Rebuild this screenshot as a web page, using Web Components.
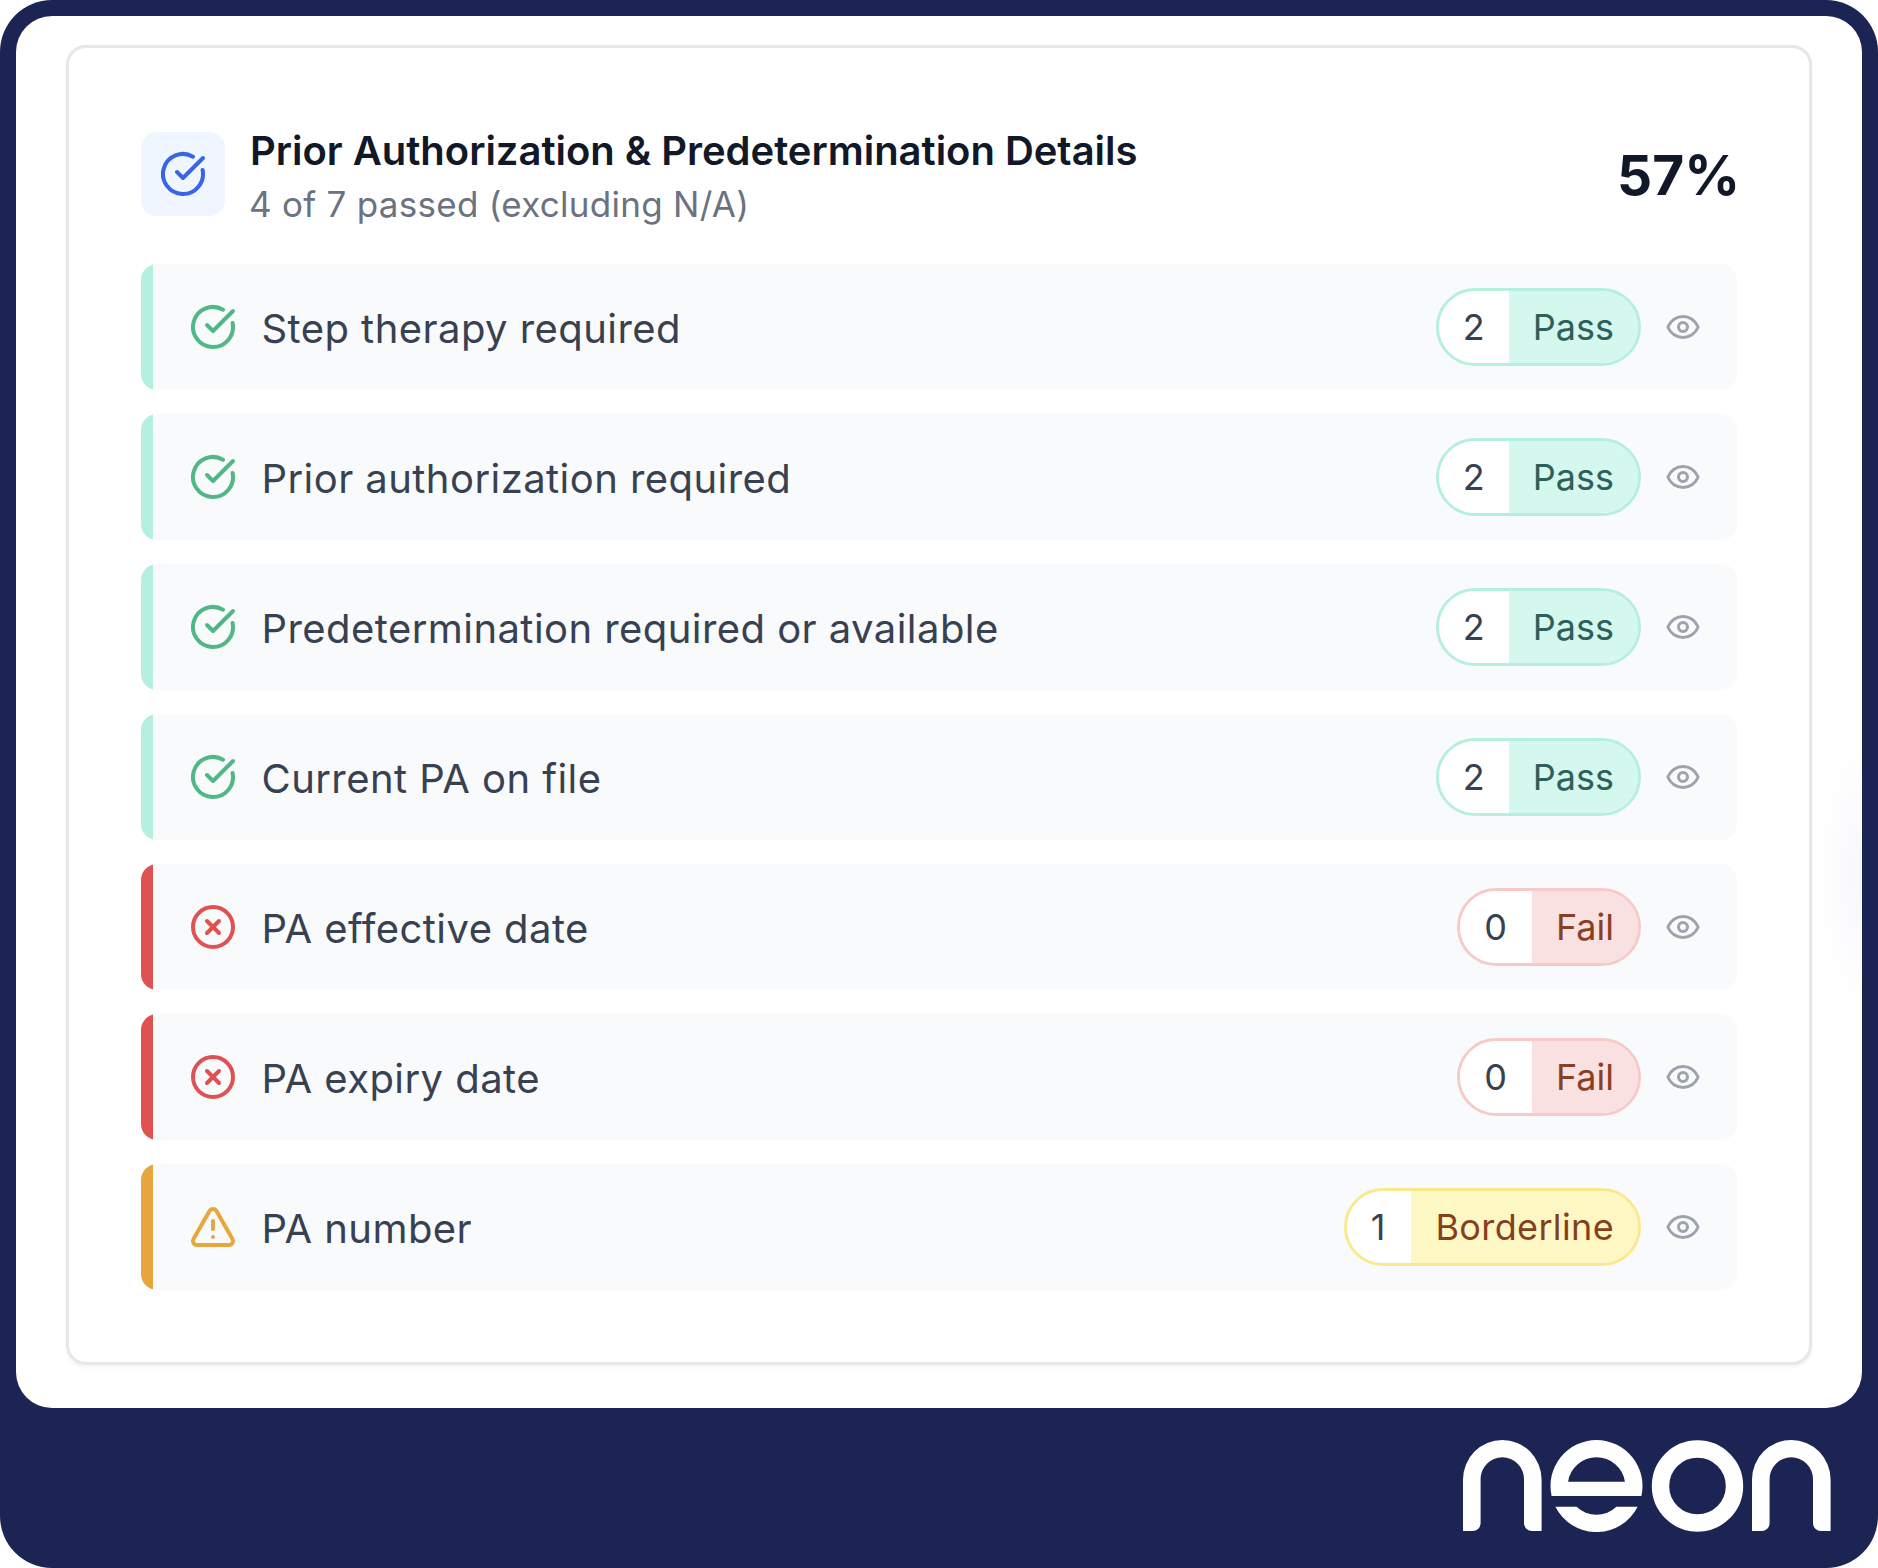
<!DOCTYPE html>
<html lang="en">

<head>
	<meta charset="UTF-8">
	<title>Prior Authorization &amp; Predetermination Details</title>
	<style>
		html, body { margin: 0; background: #fff; }
		body { font-family: Inter, "Liberation Sans", sans-serif; }
	</style>
</head>

<body>
	<app-frame>
		<score-card heading="Prior Authorization &amp; Predetermination Details" sub="4 of 7 passed (excluding N/A)" score="57%">
			<check-row status="pass" count="2">Step therapy required</check-row>
			<check-row status="pass" count="2">Prior authorization required</check-row>
			<check-row status="pass" count="2">Predetermination required or available</check-row>
			<check-row status="pass" count="2">Current PA on file</check-row>
			<check-row status="fail" count="0">PA effective date</check-row>
			<check-row status="fail" count="0">PA expiry date</check-row>
			<check-row status="borderline" count="1">PA number</check-row>
		</score-card>
	</app-frame>

	<script>
		// lucide style icons, 24 box
		const ICONS = {
			check: '<path d="M21.801 10A10 10 0 1 1 17 3.335"/><path d="m9 11 3 3L22 4"/>',
			cross: '<circle cx="12" cy="12" r="10"/><path d="m15 9-6 6"/><path d="m9 9 6 6"/>',
			warn: '<path d="m21.73 18-8-14a2 2 0 0 0-3.48 0l-8 14A2 2 0 0 0 4 21h16a2 2 0 0 0 1.73-3"/><path d="M12 9v4"/><path d="M12 17h.01"/>',
			eye: '<path d="M2.062 12.348a1 1 0 0 1 0-.696 10.75 10.75 0 0 1 19.876 0 1 1 0 0 1 0 .696 10.75 10.75 0 0 1-19.876 0"/><circle cx="12" cy="12" r="3"/>'
		};

		class UiIcon extends HTMLElement {
			connectedCallback() {
				const size = this.getAttribute('size') || 48;
				this.attachShadow({ mode: 'open' });
				this.shadowRoot.innerHTML = `
					<style>
						:host { display: block; flex: none; width: ${size}px; height: ${size}px; color: inherit; }
						svg { display: block; }
					</style>
					<svg width="${size}" height="${size}" viewBox="0 0 24 24" fill="none" stroke="currentColor" stroke-width="2" stroke-linecap="round" stroke-linejoin="round">${ICONS[this.getAttribute('name')]}</svg>`;
			}
		}
		customElements.define('ui-icon', UiIcon);

		class NeonLogo extends HTMLElement {
			connectedCallback() {
				this.attachShadow({ mode: 'open' });
				const n = 'M0 91V39.5A39.3 39.5 0 0 1 78.6 39.5V91H69A8 8 0 0 1 61 83V39A21.6 21.6 0 0 0 17.6 39V83A8 8 0 0 1 9.6 91Z';
				this.shadowRoot.innerHTML = `
					<style>
						:host { display: block; width: 368px; height: 92px; }
						svg { display: block; }
					</style>
					<svg width="368" height="92" viewBox="0 0 368 92" fill="#fff" role="img" aria-label="neon">
						<path d="${n}"/>
						<g transform="translate(87.5 0)">
							<path fill-rule="evenodd" d="M1.1 56A46 46 0 1 1 90.9 56ZM17.6 41.7A28.7 28.7 0 0 1 74.4 41.7Z"/>
							<path d="M4.9 66.7H26.1A28.7 28.7 0 0 0 65.9 66.7H87.1A46 46 0 0 1 4.9 66.7Z"/>
						</g>
						<circle cx="234.5" cy="46" r="37" fill="none" stroke="#fff" stroke-width="17.4"/>
						<path transform="translate(289 0)" d="${n}"/>
					</svg>`;
			}
		}
		customElements.define('neon-logo', NeonLogo);

		class AppFrame extends HTMLElement {
			connectedCallback() {
				this.attachShadow({ mode: 'open' });
				this.shadowRoot.innerHTML = `
					<style>
						:host { display: block; width: 1878px; height: 1568px; box-sizing: border-box; padding: 16px 16px 0; background: #1b2452; border-radius: 52px; }
						.panel { box-sizing: border-box; height: 1392px; padding: 29px 50px 44px; border-radius: 36px; background: radial-gradient(ellipse 45px 140px at 100% 859px, #f7f8fc, #fff); }
						.foot { display: flex; justify-content: flex-end; padding: 32px 31px 0 0; }
					</style>
					<div class="panel"><slot></slot></div>
					<div class="foot"><neon-logo></neon-logo></div>`;
			}
		}
		customElements.define('app-frame', AppFrame);

		class ScoreCard extends HTMLElement {
			connectedCallback() {
				this.attachShadow({ mode: 'open' });
				this.shadowRoot.innerHTML = `
					<style>
						:host { display: block; box-sizing: border-box; height: 1320px; padding: 84px 72px 72px; border: 3px solid #e5e7eb; border-radius: 20px; background: #fff; box-shadow: 0 2px 4px rgba(0, 0, 0, .05); }
						header { display: flex; align-items: center; gap: 25px; height: 84px; margin-bottom: 48px; }
						.badge { display: flex; align-items: center; justify-content: center; flex: none; width: 84px; height: 84px; border-radius: 16px; background: #eff6ff; color: #3b63e6; }
						.txt { flex: 1; align-self: flex-start; margin-top: -1px; }
						h2 { margin: 0; font-size: 40px; line-height: 40px; font-weight: 600; letter-spacing: -.03px; color: #111827; }
						p { margin: 13px 0 0 -1px; font-size: 35px; line-height: 40px; letter-spacing: .27px; color: #6b7280; }
						.score { margin-right: -3px; padding-top: 2px; font-size: 55px; font-weight: 700; color: #111827; }
						.rows { display: flex; flex-direction: column; gap: 24px; }
					</style>
					<header>
						<div class="badge"><ui-icon name="check"></ui-icon></div>
						<div class="txt">
							<h2>${this.getAttribute('heading').replace('&', '&amp;')}</h2>
							<p>${this.getAttribute('sub')}</p>
						</div>
						<div class="score">${this.getAttribute('score')}</div>
					</header>
					<div class="rows"><slot></slot></div>`;
			}
		}
		customElements.define('score-card', ScoreCard);

		// numGap: extra room after the count, track: label letter spacing
		const STATUS = {
			pass: { icon: 'check', label: 'Pass', tone: '#52b788', bar: '#b4efdf', border: '#b4efdf', bg: '#d4f7ee', ink: '#2f5f5a', numGap: 0, track: 0 },
			fail: { icon: 'cross', label: 'Fail', tone: '#e05252', bar: '#e05252', border: '#f8c9c9', bg: '#fae1e1', ink: '#8b3f22', numGap: 1, track: 0 },
			borderline: { icon: 'warn', label: 'Borderline', tone: '#e8a73c', bar: '#e8a73c', border: '#fbe88e', bg: '#fdf7c4', ink: '#853f1e', numGap: 2, track: .36 }
		};

		class StatusPill extends HTMLElement {
			connectedCallback() {
				const s = STATUS[this.getAttribute('status')];
				this.attachShadow({ mode: 'open' });
				this.shadowRoot.innerHTML = `
					<style>
						:host { display: flex; flex: none; box-sizing: border-box; height: 78px; border: 3px solid ${s.border}; border-radius: 39px; overflow: hidden; font-size: 36px; line-height: 73px; }
						.n { padding: 0 ${24 + s.numGap}px 0 24px; background: #fff; color: #374151; }
						.l { padding: 0 24px; background: ${s.bg}; color: ${s.ink}; letter-spacing: ${s.track}px; }
					</style>
					<span class="n">${this.getAttribute('count')}</span><span class="l">${s.label}</span>`;
			}
		}
		customElements.define('status-pill', StatusPill);

		class CheckRow extends HTMLElement {
			connectedCallback() {
				const status = this.getAttribute('status');
				const s = STATUS[status];
				this.attachShadow({ mode: 'open' });
				this.shadowRoot.innerHTML = `
					<style>
						:host { display: flex; align-items: center; height: 126px; border-radius: 16px; overflow: hidden; background: #f9fafb; }
						.bar { align-self: stretch; flex: none; width: 12px; margin-right: 36px; background: ${s.bar}; }
						.ic { color: ${s.tone}; }
						.name { flex: 1; margin-left: 24.5px; padding-top: 2px; font-size: 40px; letter-spacing: .44px; color: #374151; }
						.eye { margin: 0 36px 0 24px; color: #9ca3af; }
					</style>
					<div class="bar"></div>
					<ui-icon class="ic" name="${s.icon}"></ui-icon>
					<span class="name"><slot></slot></span>
					<status-pill status="${status}" count="${this.getAttribute('count')}"></status-pill>
					<ui-icon class="eye" name="eye" size="36"></ui-icon>`;
			}
		}
		customElements.define('check-row', CheckRow);
	</script>
</body>

</html>
